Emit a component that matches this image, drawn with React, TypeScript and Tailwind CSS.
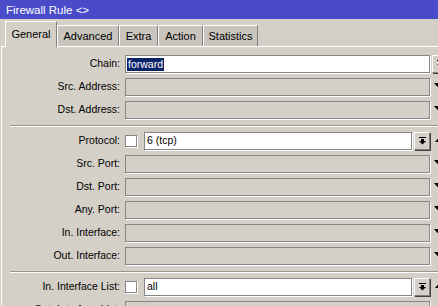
import React from 'react';

const font = { fontFamily: '"Liberation Sans", Arial, sans-serif' };

const TABS = [
    { name: 'General', width: 'w-[52px]', active: true },
    { name: 'Advanced', width: 'w-[62px]', active: false },
    { name: 'Extra', width: 'w-[39px]', active: false },
    { name: 'Action', width: 'w-[45px]', active: false },
    { name: 'Statistics', width: 'w-[55px]', active: false },
];

// small drop-down glyph: bar on top, arrow pointing down
function DropIcon() {
    return (
        <svg width="9" height="8" viewBox="0 0 9 8">
            <rect x="1" y="0" width="7" height="1" fill="#000" />
            <rect x="3" y="2" width="3" height="2" fill="#000" />
            <polygon points="1,4 8,4 4.5,7.5" fill="#000" />
        </svg>
    );
}

function DropButton() {
    return (
        <div className="w-[16px] h-[18px] shrink-0 flex items-center justify-center bg-[#d4d0c8] border-t border-l border-white border-r border-b border-r-[#808080] border-b-[#808080] shadow-[1px_1px_0_#404040]">
            <DropIcon />
        </div>
    );
}

function Arrow({ up }: { up?: boolean }) {
    return (
        <svg width="7" height="4" viewBox="0 0 7 4" className={up ? 'mb-[2px]' : 'mb-[4px]'}>
            {up ? <polygon points="3.5,0 7,4 0,4" fill="#000" /> : <polygon points="0,0 7,0 3.5,4" fill="#000" />}
        </svg>
    );
}

function Label({ text }: { text: string }) {
    return <div className="w-[118px] shrink-0 text-right text-black whitespace-nowrap">{text}</div>;
}

const boxCls = 'h-[18px] shrink-0 border border-[#868686] shadow-[1px_1px_0_#ffffff]';

function DisabledRow({ label }: { label: string }) {
    return (
        <div className="flex items-center h-[18px] shrink-0 mb-[5px]">
            <Label text={label} />
            <div className={`ml-[5px] w-[305px] bg-[#d4d0c8] ${boxCls}`} />
            <div className="ml-[4px] flex items-center">
                <Arrow />
            </div>
        </div>
    );
}

function CheckRow({ label, value }: { label: string; value: string }) {
    return (
        <div className="flex items-center h-[18px] shrink-0 mb-[5px]">
            <Label text={label} />
            <div className="ml-[5px] w-[12px] h-[12px] shrink-0 bg-white border border-[#868686] shadow-[1px_1px_0_#ffffff]" />
            <div className={`ml-[7px] w-[268px] bg-white flex items-center pl-[2px] ${boxCls}`}>{value}</div>
            <div className="ml-[2px]">
                <DropButton />
            </div>
            <div className="ml-[5px] flex items-center">
                <Arrow up />
            </div>
        </div>
    );
}

function Separator() {
    return (
        <div className="ml-[8px] mt-[1px] mb-[5px] h-[2px] w-[460px] shrink-0 border-t border-[#9a968e] border-b border-b-white" />
    );
}

export default function App() {
    return (
        <div className="w-[438px] h-[306px] overflow-hidden bg-[#d4d0c8] flex flex-col text-[10.5px]" style={font}>
            {/* Title bar */}
            <div className="h-[19px] shrink-0 bg-[#4a4bc8] text-white flex items-center pl-[6px] pt-[2px] text-[11.5px]">
                Firewall Rule &lt;&gt;
            </div>

            {/* Tabs */}
            <div className="h-[27px] shrink-0 flex items-end pl-[5px] relative z-10 text-[11px]">
                {TABS.map((tab) =>
                    tab.active ? (
                        <div
                            key={tab.name}
                            className={`${tab.width} h-[26px] mb-[-1px] shrink-0 bg-[#d4d0c8] border-t border-l border-white border-r border-r-[#808080] flex items-center justify-center pb-[1px] text-black`}
                        >
                            {tab.name}
                        </div>
                    ) : (
                        <div
                            key={tab.name}
                            className={`${tab.width} h-[21px] shrink-0 bg-[#c9c5bd] border-t border-l border-white border-r border-r-[#808080] flex items-center justify-center pt-[1px] text-black`}
                        >
                            {tab.name}
                        </div>
                    )
                )}
            </div>

            {/* Panel */}
            <div className="flex-1 ml-[1px] w-[480px] border-t border-l border-white flex flex-col pt-[8px]">
                <div className="flex items-center h-[18px] shrink-0 mb-[5px]">
                    <Label text="Chain:" />
                    <div className={`ml-[5px] w-[305px] bg-white flex items-center pl-[1px] ${boxCls}`}>
                        <span className="bg-[#0a246a] text-white h-[13px] leading-[13px] px-[1px]">forward</span>
                    </div>
                    <div className="ml-[2px]">
                        <DropButton />
                    </div>
                </div>
                <DisabledRow label="Src. Address:" />
                <DisabledRow label="Dst. Address:" />

                <Separator />

                <CheckRow label="Protocol:" value="6 (tcp)" />
                <DisabledRow label="Src. Port:" />
                <DisabledRow label="Dst. Port:" />
                <DisabledRow label="Any. Port:" />
                <DisabledRow label="In. Interface:" />
                <DisabledRow label="Out. Interface:" />

                <Separator />

                <CheckRow label="In. Interface List:" value="all" />
                <DisabledRow label="Out. Interface List:" />
            </div>
        </div>
    );
}
